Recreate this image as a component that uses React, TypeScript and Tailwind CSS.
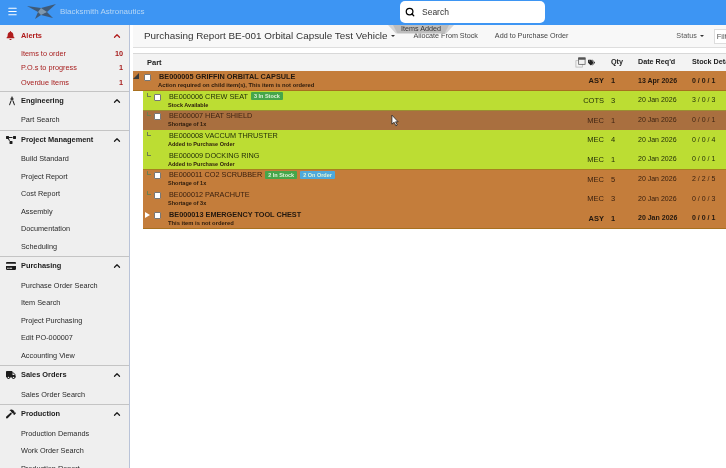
import { Menu, Search, ChevronUp } from 'lucide-react';
import { FaBell, FaProjectDiagram, FaHammer, FaTruck, FaTags, FaCreditCard } from 'react-icons/fa';
import { MdArchitecture } from 'react-icons/md';
import type { ReactNode } from 'react';

type Section = {
  title: string;
  icon: ReactNode;
  links: { label: string; count?: number }[];
  alert?: boolean;
};

const sections: Section[] = [
  {
    title: 'Alerts',
    icon: <FaBell className="h-[9px] w-[9px]" />,
    alert: true,
    links: [
      { label: 'Items to order', count: 10 },
      { label: 'P.O.s to progress', count: 1 },
      { label: 'Overdue Items', count: 1 },
    ],
  },
  {
    title: 'Engineering',
    icon: <MdArchitecture className="h-[12px] w-[12px]" />,
    links: [{ label: 'Part Search' }],
  },
  {
    title: 'Project Management',
    icon: <FaProjectDiagram className="h-[10px] w-[10px]" />,
    links: [
      { label: 'Build Standard' },
      { label: 'Project Report' },
      { label: 'Cost Report' },
      { label: 'Assembly' },
      { label: 'Documentation' },
      { label: 'Scheduling' },
    ],
  },
  {
    title: 'Purchasing',
    icon: <FaCreditCard className="h-[10px] w-[10px]" />,
    links: [
      { label: 'Purchase Order Search' },
      { label: 'Item Search' },
      { label: 'Project Purchasing' },
      { label: 'Edit PO-000007' },
      { label: 'Accounting View' },
    ],
  },
  {
    title: 'Sales Orders',
    icon: <FaTruck className="h-[10px] w-[10px]" />,
    links: [{ label: 'Sales Order Search' }],
  },
  {
    title: 'Production',
    icon: <FaHammer className="h-[10px] w-[10px]" />,
    links: [
      { label: 'Production Demands' },
      { label: 'Work Order Search' },
      { label: 'Production Report' },
    ],
  },
];

type Row = {
  code: string;
  note: string;
  noteClass?: string;
  type: string;
  qty: number;
  date: string;
  stock: string;
  tone: 'orange' | 'green' | 'dark';
  bold?: boolean;
  top?: boolean;
  check?: boolean;
  marker?: 'open' | 'closed';
  edge?: string;
  badges?: { text: string; blue?: boolean }[];
};

const rows: Row[] = [
  { code: 'BE000005 GRIFFIN ORBITAL CAPSULE', note: 'Action required on child item(s), This item is not ordered', noteClass: 'text-[5.8px]', type: 'ASY', qty: 1, date: '13 Apr 2026', stock: '0 / 0 / 1', tone: 'orange', bold: true, top: true, check: true, marker: 'open', edge: 'shadow-[inset_0_-1px_0_#a8701f]' },
  { code: 'BE000006 CREW SEAT', note: 'Stock Available', type: 'COTS', qty: 3, date: '20 Jan 2026', stock: '3 / 0 / 3', tone: 'green', check: true, badges: [{ text: '3 In Stock' }] },
  { code: 'BE000007 HEAT SHIELD', note: 'Shortage of 1x', type: 'MEC', qty: 1, date: '20 Jan 2026', stock: '0 / 0 / 1', tone: 'dark', check: true, edge: 'shadow-[inset_0_1px_0_#9a8f30]' },
  { code: 'BE000008 VACCUM THRUSTER', note: 'Added to Purchase Order', type: 'MEC', qty: 4, date: '20 Jan 2026', stock: '0 / 0 / 4', tone: 'green' },
  { code: 'BE000009 DOCKING RING', note: 'Added to Purchase Order', type: 'MEC', qty: 1, date: '20 Jan 2026', stock: '0 / 0 / 1', tone: 'green' },
  { code: 'BE000011 CO2 SCRUBBER', note: 'Shortage of 1x', type: 'MEC', qty: 5, date: '20 Jan 2026', stock: '2 / 2 / 5', tone: 'orange', check: true, edge: 'shadow-[inset_0_1px_0_#a8801f]', badges: [{ text: '2 In Stock' }, { text: '2 On Order', blue: true }] },
  { code: 'BE000012 PARACHUTE', note: 'Shortage of 3x', type: 'MEC', qty: 3, date: '20 Jan 2026', stock: '0 / 0 / 3', tone: 'orange', check: true },
  { code: 'BE000013 EMERGENCY TOOL CHEST', note: 'This item is not ordered', noteClass: 'text-[5.8px]', type: 'ASY', qty: 1, date: '20 Jan 2026', stock: '0 / 0 / 1', tone: 'orange', bold: true, check: true, marker: 'closed', edge: 'shadow-[inset_0_-1px_0_#a8701f]' },
];

function SideSection({ section }: { section: Section }) {
  const tint = section.alert ? 'text-[#b01c1c]' : 'text-[#1c1c1c]';
  return (
    <div className="border-b border-[#c4c4c4]">
      <div className={`flex h-[20.5px] items-center pb-[2.5px] pl-[6px] pr-[7px] ${tint}`}>
        <span className="flex w-[15px] justify-start">{section.icon}</span>
        <span className="flex-1 text-[7.4px] font-bold">{section.title}</span>
        <ChevronUp className="h-[10px] w-[10px]" strokeWidth={3} />
      </div>
      {section.links.map((link) => (
        <div
          key={link.label}
          className={`flex items-center pl-[21px] pr-[6px] text-[7.3px] ${section.alert ? 'h-[14.5px] text-[#a82020]' : 'h-[17.5px] text-[#2a2a2a]'}`}
        >
          <span className="flex-1">{link.label}</span>
          {link.count !== undefined && <span className="font-bold">{link.count}</span>}
        </div>
      ))}
    </div>
  );
}

function PartRow({ row }: { row: Row }) {
  const tone =
    row.tone === 'green'
      ? 'bg-[#bcdd33] text-[#1f2a08]'
      : row.tone === 'dark'
        ? 'bg-[#a96f3f] text-[#3f2413]'
        : 'bg-[#c47d3b] text-[#3a200f]';
  const weight = row.bold ? 'font-bold text-[#23180f]' : '';
  return (
    <div className={`flex h-[19.7px] items-stretch ${row.top ? '' : 'ml-[10px]'} ${tone} ${weight} ${row.edge ?? ''}`}>
      <div className="flex min-w-0 flex-1">
        <div className="relative w-[26px] shrink-0">
          {row.marker === 'open' && (
            <span className="absolute left-[0px] top-[2px] h-0 w-0 border-b-[6px] border-l-[6px] border-b-[#3a3a3a] border-l-transparent" />
          )}
          {row.marker === 'closed' && (
            <span className="absolute left-[2px] top-[3px] h-0 w-0 border-y-[3px] border-l-[5px] border-y-transparent border-l-white" />
          )}
          {!row.marker && (
            <span className="absolute left-[4px] top-[2px] h-[4px] w-[4px] border-b border-l border-[#6f7f50]" />
          )}
          {row.check && (
            <span className="absolute left-[11px] top-[3px] h-[7px] w-[7px] rounded-[1px] border border-[#777] bg-white" />
          )}
        </div>
        <div className="min-w-0">
          <div className="flex h-[11px] items-center whitespace-nowrap text-[7.3px] leading-none">
            <span>{row.code}</span>
            {row.badges?.map((b) => (
              <span
                key={b.text}
                className={`ml-[3px] rounded-[1px] px-[3px] py-[1px] text-[5.5px] font-bold leading-[6px] text-[#dff3d8] ${b.blue ? 'bg-[#4fa9dc]' : 'bg-[#46a64a]'}`}
              >
                {b.text}
              </span>
            ))}
          </div>
          <div className={`-ml-[1px] whitespace-nowrap font-bold leading-[7px] text-[#2b1a0c] ${row.noteClass ?? 'text-[5.5px]'}`}>{row.note}</div>
        </div>
      </div>
      <div className="flex w-[50px] items-center justify-end text-[7.5px]">{row.type}</div>
      <div className="flex w-[34px] items-center pl-[7px] text-[7.5px]">{row.qty}</div>
      <div className="flex w-[54px] items-center text-[7px]">{row.date}</div>
      <div className="flex w-[68px] items-center text-[7px]">{row.stock}</div>
    </div>
  );
}

export default function App() {
  return (
    <div className="relative flex h-[468px] w-[726px] flex-col overflow-hidden bg-white font-['Liberation_Sans',Arial,sans-serif] blur-[0.3px]">
      <header className="flex h-[25px] shrink-0 items-center bg-[#3d95f3]">
        <Menu className="mb-[3px] ml-[7px] h-[11px] w-[11px] text-white" strokeWidth={2.5} />
        <svg viewBox="0 0 31 17" className="mb-[2px] ml-[8px] h-[17px] w-[31px]">
          <polygon points="1,3 15,5 30,1 21,9 27,15 15,12 9,16 12,9" fill="#3f5a78" />
          <polygon points="12,9 15,5 21,9 15,12" fill="#7d97ae" />
        </svg>
        <span className="mb-[2px] ml-[3px] w-[86px] whitespace-nowrap text-[8px] text-[#b5d6f5]">Blacksmith Astronautics</span>
        <div className="mb-[1px] ml-[254px] flex h-[22px] w-[145px] items-center rounded-[5px] bg-white pl-[5px]">
          <Search className="h-[10px] w-[10px] text-black" strokeWidth={3} />
          <span className="ml-[7px] text-[8.5px] text-[#333]">Search</span>
        </div>
      </header>
      <div className="flex min-h-0 flex-1">
        <aside className="w-[130px] shrink-0 overflow-hidden border-r border-[#b9c3d8] bg-[#efefef] pt-[1.5px]">
          {sections.map((section) => (
            <SideSection key={section.title} section={section} />
          ))}
        </aside>
        <main className="min-w-0 flex-1 overflow-hidden pl-[3px]">
          <div className="flex h-[23px] w-[640px] items-center whitespace-nowrap border-b border-[#dedede] bg-[#f8f8f8] pl-[11px]">
            <span className="text-[9.9px] text-[#333]">Purchasing Report BE-001 Orbital Capsule Test Vehicle</span>
            <span className="ml-[3px] h-0 w-0 border-x-[2px] border-t-[2px] border-x-transparent border-t-[#333]" />
            <span className="ml-[19px] text-[7.2px] text-[#444]">Allocate From Stock</span>
            <span className="ml-[17px] text-[7.2px] text-[#444]">Add to Purchase Order</span>
            <span className="ml-[108px] text-[7.2px] text-[#555]">Status</span>
            <span className="ml-[3px] h-0 w-0 border-x-[2px] border-t-[2px] border-x-transparent border-t-[#333]" />
            <span className="ml-[10px] h-[15px] w-[40px] border border-[#ddd] bg-white pl-[2px] text-[7.5px] leading-[13px] text-[#555]">Filter</span>
          </div>
          <div className="mt-[5px] w-[627px]">
            <div className="flex h-[18px] items-center border-t border-[#d8d8d8] bg-[#f3f3f3] text-[7.2px] font-bold text-[#222]">
              <span className="flex-1 pl-[14px] text-[7.5px]">Part</span>
              <span className="flex w-[50px] items-center justify-end gap-[2px] pr-[9px]">
                <svg viewBox="0 0 12 12" className="h-[11px] w-[11px]" fill="none" stroke="#555" strokeWidth="0.8">
                  <rect x="1" y="4" width="7" height="7" stroke="#b5b5b5" />
                  <rect x="4" y="1" width="7" height="7" fill="#f3f3f3" />
                  <rect x="4" y="1" width="7" height="1.5" fill="#555" />
                </svg>
                <FaTags className="h-[7px] w-[7px]" />
              </span>
              <span className="w-[34px] pl-[7px]">Qty</span>
              <span className="w-[54px]">Date Req'd</span>
              <span className="w-[68px] whitespace-nowrap">Stock Details</span>
            </div>
            {rows.map((row) => (
              <PartRow key={row.code} row={row} />
            ))}
          </div>
        </main>
      </div>
      {/* popup tab hanging from the header */}
      <div className="absolute left-[388px] top-[25px] h-[8.5px] w-[66px] bg-[#d4d4d4] [clip-path:polygon(0_0,100%_0,88%_100%,12%_100%)]">
        <div className="mx-[5px] h-full bg-[#bdbdbd] text-center text-[7.2px] leading-[8.5px] text-[#333] [clip-path:polygon(0_0,100%_0,92%_100%,8%_100%)]">
          Items Added
        </div>
      </div>
      <svg viewBox="0 0 10 14" className="absolute left-[391px] top-[114px] h-[13px] w-[9px]">
        <path d="M1 1 V11 L3.5 9 L5.5 13 L7 12 L5 8.5 H8 Z" fill="#fff" stroke="#222" strokeWidth="0.9" />
      </svg>
    </div>
  );
}
